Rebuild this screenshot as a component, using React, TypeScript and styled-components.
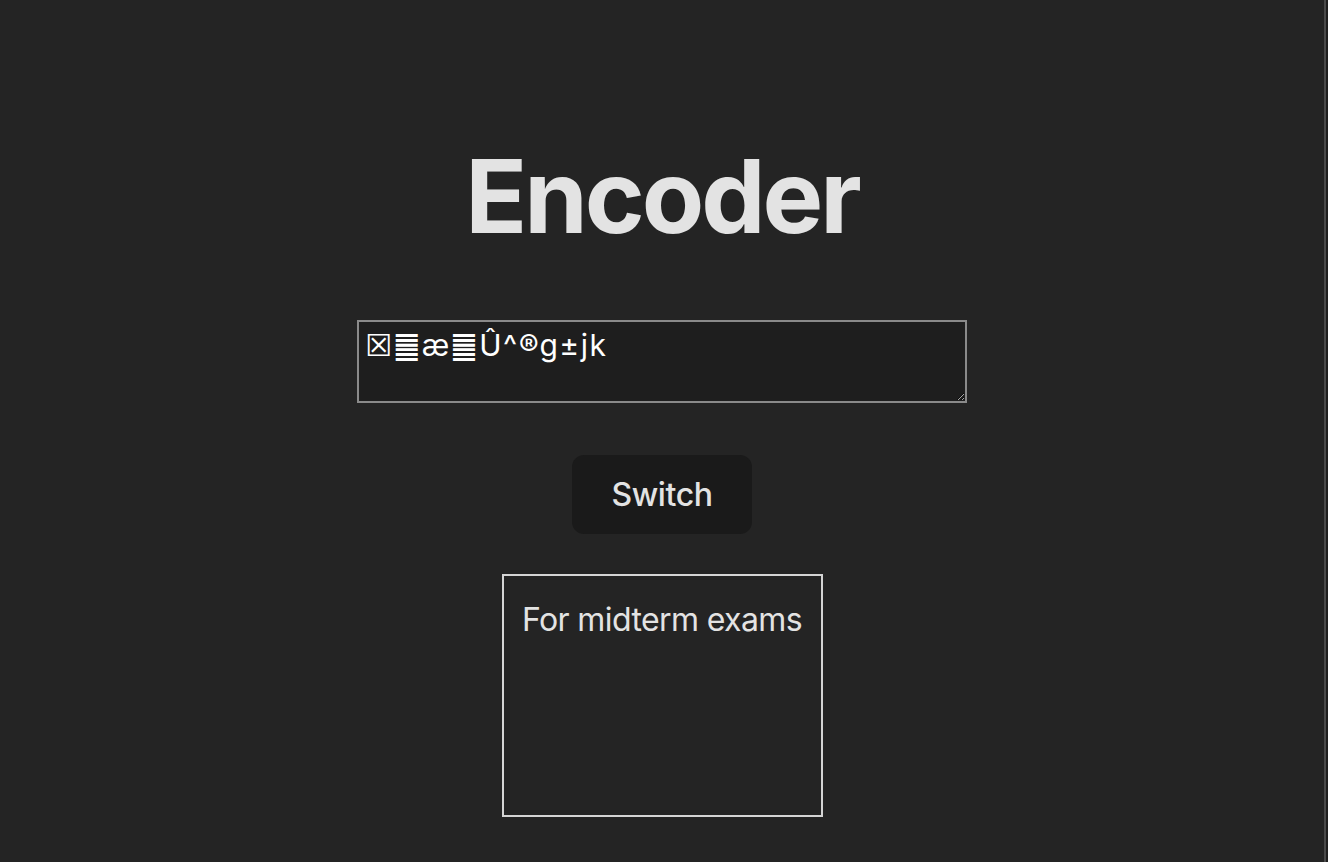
import styled, { createGlobalStyle } from 'styled-components'

const GlobalStyle = createGlobalStyle`
  html, body {
    margin: 0;
    padding: 0;
    background: #242424;
  }
  body {
    font-family: Inter, "DejaVu Sans", sans-serif;
    font-size: 32px;
    line-height: 1.5;
    color: rgba(255, 255, 255, 0.87);
    overflow: hidden;
  }
`

const Page = styled.div`
  display: flex;
  width: 1328px;
  height: 862px;
`

const Main = styled.main`
  flex: 1;
  display: flex;
  flex-direction: column;
  align-items: center;
  padding-top: 140px;
`

const Edge = styled.div`
  width: 2px;
  border-left: 2px solid #4a4a4a;
  background: #1f1f1f;
`

const Title = styled.h1`
  margin: 0;
  font-size: 102px;
  line-height: 1.1;
  font-weight: 700;
  color: #e3e3e3;
  letter-spacing: -3px;
`

const Input = styled.textarea`
  box-sizing: border-box;
  margin-top: 68px;
  width: 610px;
  height: 83px;
  padding: 5px 6px;
  border: 2px solid #8a8a8a;
  background: #1e1e1e;
  color: #ffffff;
  font-family: Inter, "DejaVu Sans", sans-serif;
  font-size: 30px;
  letter-spacing: 1.5px;
  line-height: normal;
  outline: none;
`

const Button = styled.button`
  margin-top: 52px;
  width: 180px;
  height: 79px;
  padding: 0;
  border: 1px solid transparent;
  border-radius: 12px;
  background: #1a1a1a;
  color: #e3e3e3;
  font-family: Inter, sans-serif;
  font-size: 32px;
  font-weight: 500;
  letter-spacing: -0.4px;
  line-height: 1;
  cursor: pointer;
`

const Output = styled.div`
  box-sizing: border-box;
  margin-top: 40px;
  width: 321px;
  height: 243px;
  padding-top: 20px;
  border: 2px solid #d4d4d4;
  text-align: center;
  color: #e3e3e3;
  letter-spacing: -0.6px;
`

function App() {
  const encoded: string = '\u2612\u4DC0\u00E6\u4DC0\u00DB^\u00AEg\u00B1jk'

  return (
    <Page>
      <GlobalStyle />
      <Main>
        <Title>Encoder</Title>
        <Input defaultValue={encoded} spellCheck={false} />
        <Button>Switch</Button>
        <Output>For midterm exams</Output>
      </Main>
      <Edge />
    </Page>
  )
}

export default App
